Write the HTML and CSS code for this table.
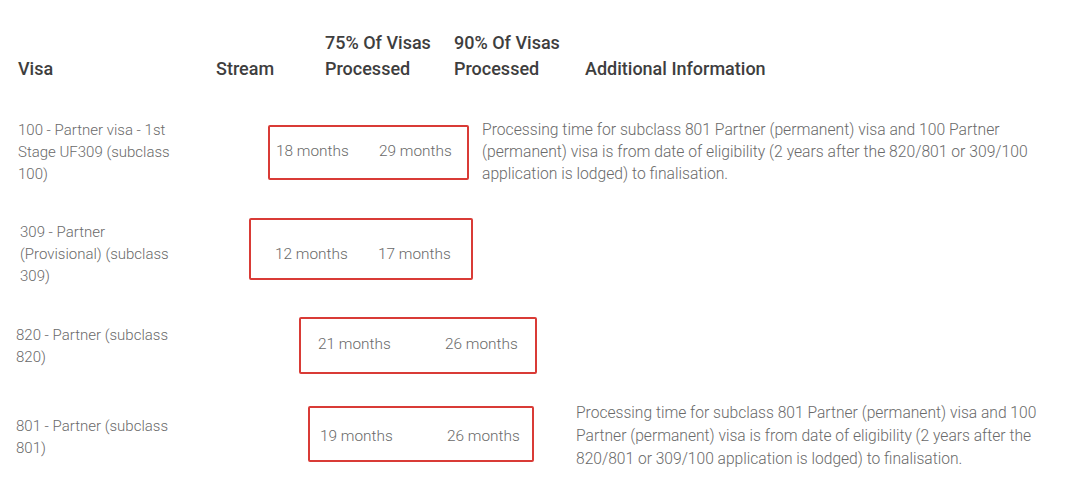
FILE: index.html
```html
<!DOCTYPE html>
<html lang="en">
<head>
<meta charset="utf-8">
<title>Partner visa processing times</title>
<link rel="stylesheet" href="styles.css">
</head>
<body>
<div class="table">
  <div class="head">
    <div class="h-visa">Visa</div>
    <div class="h-stream">Stream</div>
    <div class="h-p75">75% Of Visas<br>Processed</div>
    <div class="h-p90">90% Of Visas<br>Processed</div>
    <div class="h-info">Additional Information</div>
  </div>

  <div class="row r1">
    <div class="visa">100 - Partner visa - 1st<br>Stage UF309 (subclass<br>100)</div>
    <div class="box"><span class="c1">18 months</span><span class="c2">29 months</span></div>
    <div class="info">Processing time for subclass 801 Partner (permanent) visa and 100 Partner<br>(permanent) visa is from date of eligibility (2 years after the 820/801 or 309/100<br>application is lodged) to finalisation.</div>
  </div>

  <div class="row r2">
    <div class="visa">309 - Partner<br>(Provisional) (subclass<br>309)</div>
    <div class="box"><span class="c1">12 months</span><span class="c2">17 months</span></div>
  </div>

  <div class="row r3">
    <div class="visa">820 - Partner (subclass<br>820)</div>
    <div class="box"><span class="c1">21 months</span><span class="c2">26 months</span></div>
  </div>

  <div class="row r4">
    <div class="visa">801 - Partner (subclass<br>801)</div>
    <div class="box"><span class="c1">19 months</span><span class="c2">26 months</span></div>
    <div class="info">Processing time for subclass 801 Partner (permanent) visa and 100<br>Partner (permanent) visa is from date of eligibility (2 years after the<br>820/801 or 309/100 application is lodged) to finalisation.</div>
  </div>
</div>
</body>
</html>
```

FILE: styles.css
```css
html, body {
  margin: 0;
  padding: 0;
  background: #ffffff;
}

body {
  font-family: Roboto, "Liberation Sans", Arial, sans-serif;
  width: 1080px;
  height: 491px;
  overflow: hidden;
}

.head {
  display: flex;
  align-items: flex-end;
  padding: 30px 0 0 18px;
  font-size: 18px;
  line-height: 26px;
  font-weight: 500;
  color: #3e3e3e;
  white-space: nowrap;
}

.h-visa { width: 198px; }
.h-stream { width: 109px; }
.h-p75 { width: 129px; }
.h-p90 { width: 131px; }

.row {
  display: flex;
  align-items: center;
  font-size: 15.4px;
  font-weight: 300;
  line-height: 22px;
  color: #6a6a6a;
  white-space: nowrap;
}

.visa { flex: none; font-size: 15px; }

.box {
  flex: none;
  display: flex;
  align-items: center;
  box-sizing: border-box;
  border: 2px solid #d93b36;
  border-radius: 2px;
}

.c1 { flex: none; }

.info { flex: none; font-size: 15.7px; }

/* row 1 */
.r1 { margin-top: 37px; padding-left: 18px; }
.r1 .visa { width: 250px; }
.r1 .box { width: 201px; height: 55px; padding: 0 0 3px 6px; }
.r1 .c1 { width: 103px; }
.r1 .info { margin-left: 13px; }

/* row 2 */
.r2 { margin-top: 33px; padding-left: 20px; }
.r2 .visa { width: 229px; }
.r2 .box { width: 224px; height: 62px; padding: 10px 0 0 24px; margin-bottom: 10px; }
.r2 .c1 { width: 103px; }

/* row 3 */
.r3 { margin-top: 27px; padding-left: 16px; }
.r3 .visa { width: 283px; }
.r3 .box { width: 238px; height: 57px; padding: 0 0 3px 17px; }
.r3 .c1 { width: 127px; }

/* row 4 */
.r4 { margin-top: 28px; padding-left: 16px; }
.r4 .visa { width: 292px; }
.r4 .box { width: 226px; height: 56px; padding: 4px 0 0 10px; margin-bottom: 6px; }
.r4 .c1 { width: 127px; }
.r4 .info { margin-left: 42px; line-height: 23px; font-size: 15.6px; }
```
